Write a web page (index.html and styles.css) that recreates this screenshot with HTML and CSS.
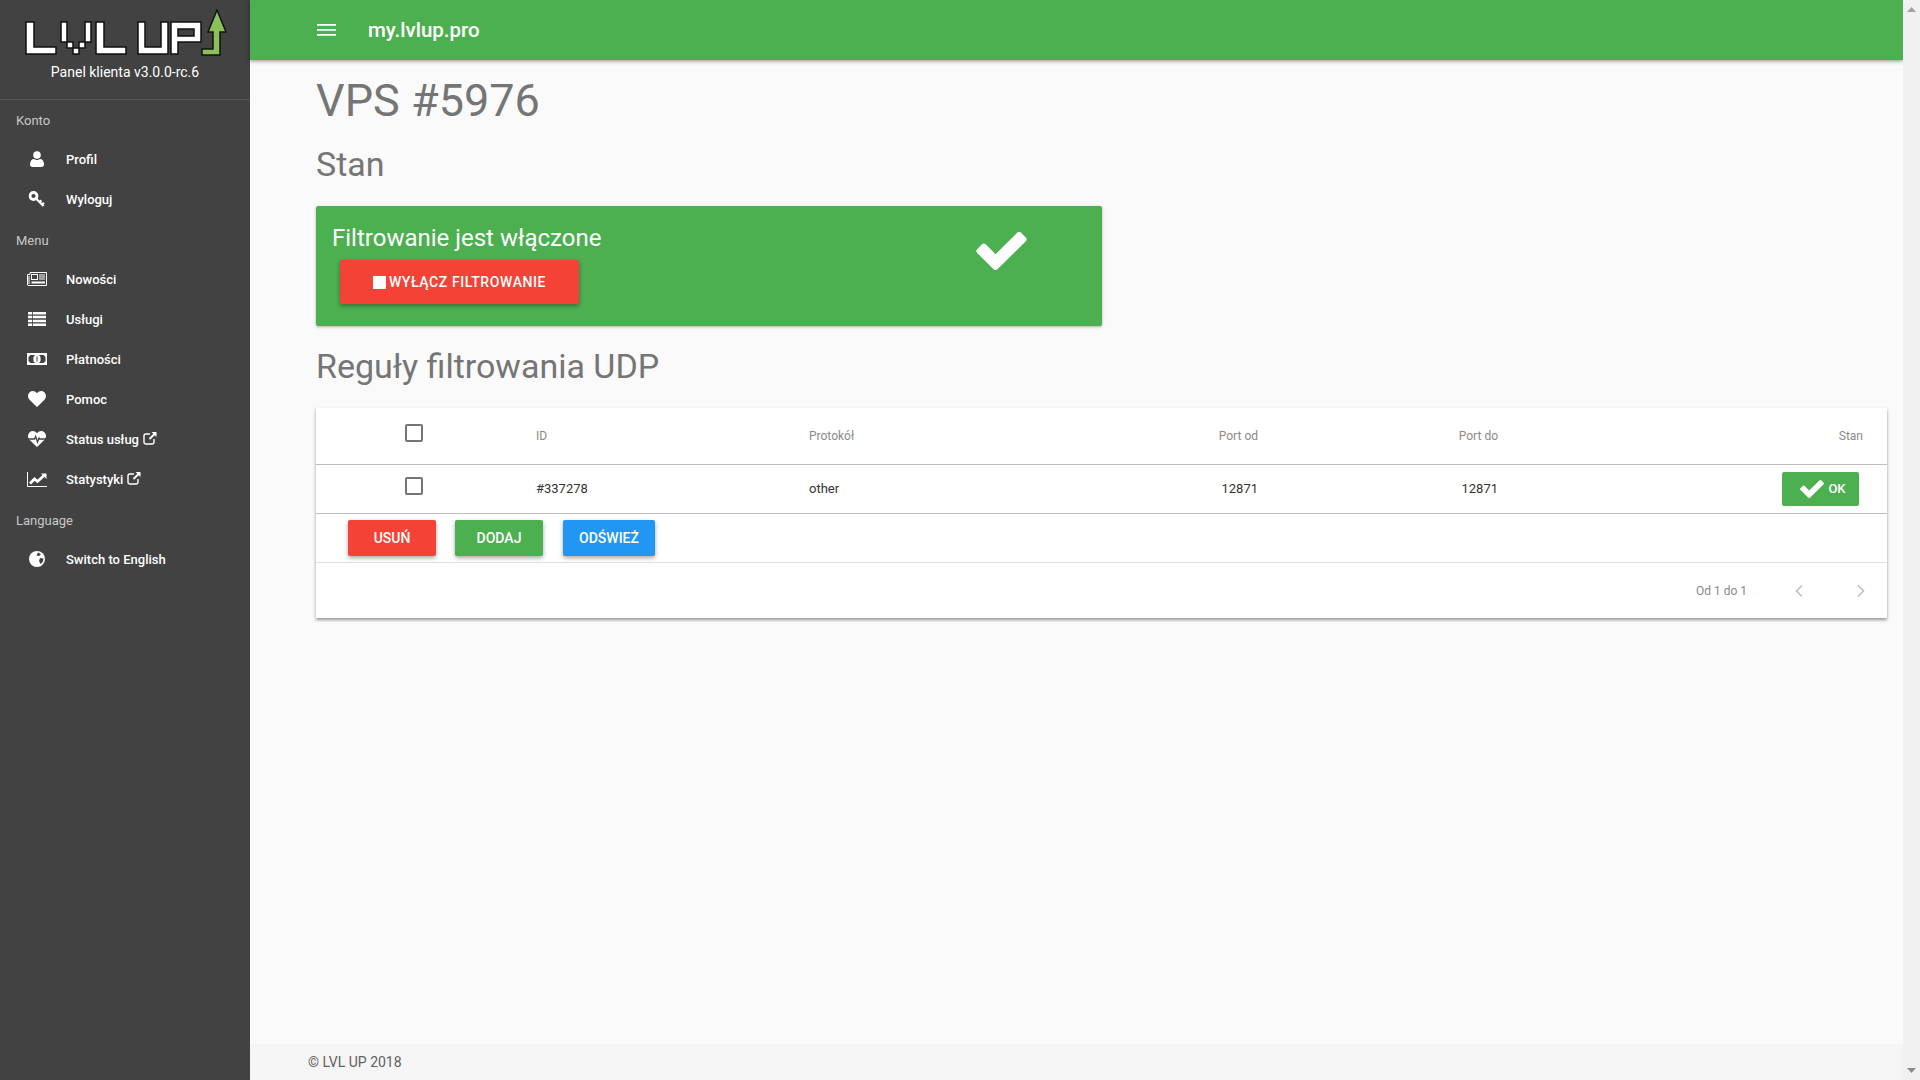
FILE: index.html
```html
<!DOCTYPE html>
<html lang="pl">
<head>
<meta charset="utf-8">
<title>VPS #5976</title>
<link rel="stylesheet" href="styles.css">
</head>
<body>
<svg class="defs" width="0" height="0" aria-hidden="true">
  <defs>
    <symbol id="i-ext" viewBox="0 0 14 14"><path d="M11 8v3.2A1.8 1.8 0 0 1 9.2 13H2.8A1.8 1.8 0 0 1 1 11.200V4.800A1.800 1.800 0 0 1 2.800 3H7" fill="none" stroke="currentColor" stroke-width="1.400"/><path d="M8.500 1H13.500V6L11.700 4.200 7.200 8.700 5.800 7.300 10.300 2.800Z" fill="currentColor"/></symbol>
    <symbol id="i-check" viewBox="0 0 50 38"><path d="M19 38a3 3 0 0 1-2.200-.9L.9 21.200a3 3 0 0 1 0-4.300l4.300-4.300a3 3 0 0 1 4.300 0L19 22.200 40.500.9a3 3 0 0 1 4.300 0l4.300 4.300a3 3 0 0 1 0 4.300L21.200 37.100A3 3 0 0 1 19 38Z" fill="currentColor"/></symbol>
  </defs>
</svg>
<aside class="sidebar">
  <div class="brand">
    <svg class="logo" viewBox="0 0 210 56" role="img" aria-label="LVL UP">
      <g fill="#fff" stroke="#111" stroke-width="1.500">
        <path d="M1 13V45H31V38H9V13Z"/>
        <path d="M36 13H42V33H48V39H54V33H60V13H66V33H60V39H54V45H48V39H42V33H36Z"/>
        <path d="M71 13V45H101V38H79V13Z"/>
        <path d="M113 13V45H143V13H136V38H120V13Z"/>
        <path fill-rule="evenodd" d="M146 13H176V33H153V45H146ZM153 20V27H169V20Z"/>
      </g>
      <path d="M192 1 201 23H195V46H177V40H188V23H183Z" fill="#8bc05a" stroke="#111" stroke-width="1.500"/>
    </svg>
    <div class="brand-text">Panel klienta v3.0.0-rc.6</div>
  </div>
  <nav class="nav">
    <div class="nav-head">Konto</div>
    <a class="nav-item"><span class="nav-ic"><svg width="14" height="16" viewBox="0 0 14 16"><circle cx="7" cy="4" r="3.800" fill="#fff"/><path d="M0 13.500C0 10 1.800 8 4 8c1 .8 2 1.100 3 1.100S9 8.800 10 8c2.200 0 4 2 4 5.500 0 1.600-1 2.500-2.500 2.500h-9C1 16 0 15.100 0 13.500Z" fill="#fff"/></svg></span>Profil</a>
    <a class="nav-item"><span class="nav-ic"><svg width="17" height="16" viewBox="0 0 17 16"><circle cx="5" cy="5" r="3.500" fill="none" stroke="#fff" stroke-width="2.800"/><path d="M7.800 7.800 15 15M11 11l2-1.700M13.500 13.500l2-1.700" fill="none" stroke="#fff" stroke-width="2.200"/></svg></span>Wyloguj</a>
    <div class="nav-head">Menu</div>
    <a class="nav-item"><span class="nav-ic"><svg width="20" height="14" viewBox="0 0 20 14"><path d="M3 .5h16.500v13H1A.8.8 0 0 1 .5 13V2.500H3Z" fill="none" stroke="#fff"/><path d="M2 4v8" stroke="#fff"/><rect x="4.500" y="2.500" width="6" height="5" fill="none" stroke="#fff"/><path d="M12 3h6M12 5h6M12 7h6" stroke="#fff"/><path d="M4.500 9.500h13.500v2H4.500Z" fill="#fff"/></svg></span>Nowości</a>
    <a class="nav-item"><span class="nav-ic"><svg width="18" height="14" viewBox="0 0 18 14"><path d="M0 0h18v2.500H0ZM0 3.700h18v2.500H0ZM0 7.700h18v2.500H0ZM0 11.500h18V14H0Z" fill="#fff"/><path d="M4.500 0v14" stroke="#424242" stroke-width=".8"/></svg></span>Usługi</a>
    <a class="nav-item"><span class="nav-ic"><svg width="20" height="12" viewBox="0 0 20 12"><path fill-rule="evenodd" d="M0 0h20v12H0ZM3.500 2 1.500 4v4l2 2h13l2-2V4l-2-2Z" fill="#fff"/><ellipse cx="10" cy="6" rx="3.700" ry="4.300" fill="#fff"/><path d="M9.500 3.500h1v5h-1Z" fill="#424242"/></svg></span>Płatności</a>
    <a class="nav-item"><span class="nav-ic"><svg width="18" height="16" viewBox="0 0 18 16"><path d="M9 16 1.500 8.700C-.5 6.700-.4 3.200 1.500 1.400 3.500-.5 6.800-.4 9 2.300c2.200-2.700 5.500-2.800 7.500-.9 1.900 1.800 2 5.300 0 7.300Z" fill="#fff"/></svg></span>Pomoc</a>
    <a class="nav-item"><span class="nav-ic"><svg width="18" height="16" viewBox="0 0 18 16"><path d="M9 16 1.500 8.700C-.5 6.700-.4 3.200 1.500 1.400 3.500-.5 6.800-.4 9 2.300c2.200-2.700 5.500-2.800 7.500-.9 1.900 1.800 2 5.300 0 7.300Z" fill="#fff"/><path d="M0 8h6.500l1.200-2.500L9.500 11l1.500-4 .8 1H18" fill="none" stroke="#424242" stroke-width="1.300"/></svg></span><span>Status usług</span><svg class="ext" width="14" height="14"><use href="#i-ext"/></svg></a>
    <a class="nav-item"><span class="nav-ic"><svg width="20" height="15" viewBox="0 0 20 15"><path d="M.5 0v14.500H20" fill="none" stroke="#fff"/><path d="M3 11.500 7.500 7l3 2.500L17 3.500" fill="none" stroke="#fff" stroke-width="2.800"/><path d="M14 1.500H19.500V7Z" fill="#fff"/></svg></span><span>Statystyki</span><svg class="ext" width="14" height="14"><use href="#i-ext"/></svg></a>
    <div class="nav-head">Language</div>
    <a class="nav-item"><span class="nav-ic"><svg width="16" height="16" viewBox="0 0 16 16"><circle cx="8" cy="8" r="8" fill="#fff"/><path d="M9 1.500 12 3 10 5 7.500 4.500ZM11 7 14.500 7.500 14 10.500 11.500 13 10 10Z" fill="#424242"/></svg></span>Switch to English</a>
  </nav>
</aside>
<div class="column">
  <header class="topbar">
    <svg class="burger" width="19" height="12" viewBox="0 0 19 12"><path d="M0 0h19v1.800H0ZM0 5h19v1.800H0ZM0 10h19v1.800H0Z" fill="#fff"/></svg>
    <span class="site">my.lvlup.pro</span>
  </header>
  <main class="content">
    <h1 class="title">VPS #5976</h1>
    <h2 class="subtitle">Stan</h2>
    <section class="status">
      <div class="status-left">
        <div class="status-text">Filtrowanie jest włączone</div>
        <button class="btn btn-red btn-wide"><span class="stop"></span>Wyłącz filtrowanie</button>
      </div>
      <svg class="status-check" width="51" height="38"><use href="#i-check"/></svg>
    </section>
    <h2 class="subtitle subtitle-rules">Reguły filtrowania UDP</h2>
    <section class="card">
      <table class="rules">
        <colgroup><col class="c1"><col class="c2"><col class="c3"><col class="c4"><col class="c5"><col class="c6"></colgroup>
        <thead>
          <tr><th><span class="box"></span></th><th class="left">ID</th><th class="left">Protokół</th><th>Port od</th><th>Port do</th><th>Stan</th></tr>
        </thead>
        <tbody>
          <tr><td><span class="box"></span></td><td class="left">#337278</td><td class="left">other</td><td>12871</td><td>12871</td><td><span class="ok"><svg width="24" height="18"><use href="#i-check"/></svg>OK</span></td></tr>
        </tbody>
      </table>
      <div class="actions">
        <button class="btn btn-red btn-sm">Usuń</button>
        <button class="btn btn-green btn-sm">Dodaj</button>
        <button class="btn btn-blue btn-sm">Odśwież</button>
      </div>
      <div class="pager">
        <span>Od 1 do 1</span>
        <svg class="chev-l" width="10" height="14" viewBox="0 0 10 14"><path d="M8 1.500 2.500 7 8 12.500" fill="none" stroke="#bdbdbd" stroke-width="1.500"/></svg>
        <svg class="chev-r" width="10" height="14" viewBox="0 0 10 14"><path d="M2 1.500 7.500 7 2 12.500" fill="none" stroke="#bdbdbd" stroke-width="1.500"/></svg>
      </div>
    </section>
  </main>
  <footer class="foot">© LVL UP 2018</footer>
</div>
<div class="scroll">
  <svg width="9" height="5" viewBox="0 0 9 5"><path d="M4.500 0 9 5H0Z" fill="#a3a3a3"/></svg>
  <svg width="9" height="5" viewBox="0 0 9 5"><path d="M0 0H9L4.500 5Z" fill="#8c8c8c"/></svg>
</div>
</body>
</html>
```
FILE: styles.css
```css
* { box-sizing: border-box; }
html, body { height: 100%; }
body {
  margin: 0;
  display: flex;
  height: 100vh;
  overflow: hidden;
  font-family: Roboto, "Liberation Sans", sans-serif;
  background: #fafafa;
}
.defs { position: absolute; }

.sidebar { width: 250px; flex: none; background: #424242; color: #fff; }
.brand {
  height: 100px;
  border-bottom: 1px solid #555;
  display: flex;
  flex-direction: column;
  align-items: center;
}
.logo { width: 210px; height: 56px; margin: 9px 0 0 10px; display: block; flex: none; }
.brand-text { font-size: 14px; line-height: 16px; margin-top: -1px; }
.nav-head {
  height: 40px;
  padding-left: 16px;
  font-size: 13px;
  line-height: 43px;
  color: rgba(255, 255, 255, .72);
}
.nav-head:first-child { height: 39px; line-height: 41px; }
.nav-item {
  height: 40px;
  display: flex;
  align-items: center;
  font-size: 13px;
  font-weight: 500;
  color: #fff;
}
.nav-ic { width: 66px; padding-left: 37px; flex: none; display: flex; }
.nav-ic svg { flex: none; transform: translateX(-50%); }
.ext { margin: -3px 0 0 4px; color: #fff; }

.column { flex: 1; min-width: 0; display: flex; flex-direction: column; }
.topbar {
  height: 60px;
  flex: none;
  background: #4caf50;
  color: #fff;
  display: flex;
  align-items: center;
  padding-left: 67px;
  box-shadow: 0 1px 4px rgba(0, 0, 0, .45);
}
.burger { flex: none; }
.site { margin-left: 32px; font-size: 20.500px; font-weight: 500; }

.content { flex: 1; padding: 0 16px 0 66px; }
.title { margin: 15px 0 0; font-size: 45px; line-height: 52px; font-weight: 400; color: #757575; }
.subtitle { margin: 17px 0 0; font-size: 34px; line-height: 40px; font-weight: 400; color: #757575; }
.subtitle-rules { margin-top: 20px; }
.status {
  width: 786px;
  height: 120px;
  margin-top: 22px;
  background: #4caf50;
  border-radius: 2px;
  box-shadow: 0 1px 3px rgba(0, 0, 0, .3);
  color: #fff;
  display: flex;
}
.status-left { width: 660px; padding: 16px 0 0 16px; }
.status-text { font-size: 24px; line-height: 32px; }
.status-check { margin-top: 26px; color: #fff; }

.btn {
  border: 0;
  border-radius: 2px;
  color: #fff;
  font: 500 14px Roboto, "Liberation Sans", sans-serif;
  text-transform: uppercase;
  box-shadow: 0 2px 4px rgba(0, 0, 0, .35);
  padding: 0;
}
.btn-red { background: #f44336; }
.btn-green { background: #4caf50; }
.btn-blue { background: #2196f3; }
.btn-wide {
  width: 239px;
  height: 44px;
  margin: 6px 0 0 8px;
  display: flex;
  align-items: center;
  justify-content: center;
  letter-spacing: .6px;
}
.stop { width: 13px; height: 13px; background: #fff; margin-right: 3px; }
.btn-sm { height: 36px; }
.btn-sm:nth-child(1) { width: 88px; }
.btn-sm:nth-child(2) { width: 88px; }
.btn-sm:nth-child(3) { width: 92px; margin-left: 1px; }

.card {
  height: 210px;
  margin-top: 22px;
  background: #fff;
  box-shadow: 0 2px 3px rgba(0, 0, 0, .4);
}
.rules { width: 100%; border-collapse: collapse; table-layout: fixed; }
.c1 { width: 196px; }
.c2 { width: 273px; }
.c3 { width: 265px; }
.c4 { width: 232px; }
.c5 { width: 240px; }
.rules th, .rules td {
  padding: 0 24px;
  text-align: right;
  border-bottom: 1px solid #bdbdbd;
}
.rules th { height: 56px; font-size: 12px; font-weight: 400; color: #8a8a8a; }
.rules td { height: 49px; font-size: 13px; color: #333; }
.rules th:first-child, .rules td:first-child { text-align: center; padding: 0; }
.rules .left { text-align: left; }
.box {
  display: block;
  width: 18px;
  height: 18px;
  margin: 0 auto 6px;
  border: 2px solid #757575;
  border-radius: 2px;
}
.rules td:last-child { padding-right: 28px; }
.ok {
  width: 77px;
  height: 34px;
  margin-left: auto;
  display: flex;
  align-items: center;
  justify-content: center;
  gap: 4px;
  padding-left: 5px;
  background: #4caf50;
  border-radius: 2px;
  color: #fff;
  font-size: 13px;
  font-weight: 500;
}
.actions {
  height: 49px;
  padding: 6px 0 0 32px;
  display: flex;
  align-items: flex-start;
  gap: 19px;
  border-bottom: 1px solid #e0e0e0;
}
.pager {
  height: 56px;
  display: flex;
  align-items: center;
  justify-content: flex-end;
  padding-right: 21px;
  font-size: 12px;
  color: #8a8a8a;
}
.chev-l { margin-left: 47px; }
.chev-r { margin-left: 52px; }

.foot {
  height: 36px;
  flex: none;
  background: #f5f5f5;
  padding-left: 58px;
  font-size: 14px;
  line-height: 36px;
  color: #616161;
}
.scroll {
  width: 17px;
  flex: none;
  background: #f1f1f1;
  display: flex;
  flex-direction: column;
  justify-content: space-between;
  align-items: center;
  padding: 7px 0;
}
```
